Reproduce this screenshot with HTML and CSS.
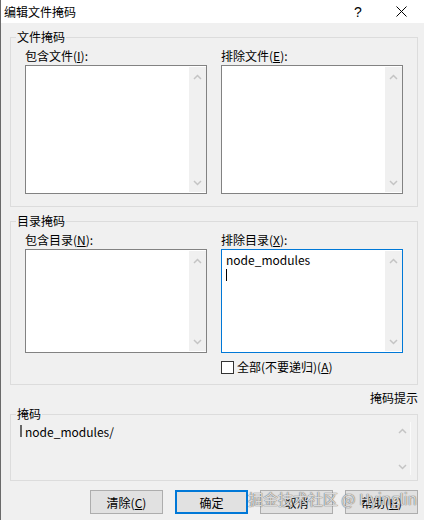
FILE: index.html
```html
<!DOCTYPE html>
<html lang="zh-CN">
<head>
    <meta charset="UTF-8">
    <title>编辑文件掩码</title>
    <link rel="stylesheet" href="styles.css">
</head>
<body>
    <div class="titlebar">
        <div class="title">编辑文件掩码</div>
        <div class="tb-help">?</div>
        <div class="tb-close">
            <svg width="11" height="11" viewBox="0 0 11 11"><path d="M0.5 0.5L10.5 10.5M10.5 0.5L0.5 10.5" stroke="#000" stroke-width="1"/></svg>
        </div>
    </div>

    <div class="content">
        <fieldset class="group">
            <legend>文件掩码</legend>
            <div class="cols">
                <div class="col">
                    <div class="label">包含文件(<u>I</u>):</div>
                    <div class="list tall">
                        <div class="list-body"></div>
                        <div class="scroll">
                            <svg class="arrow" width="9" height="6" viewBox="0 0 9 6"><path d="M1 5L4.5 1.5L8 5" fill="none" stroke="#c4c4c4" stroke-width="1.5"/></svg>
                            <svg class="arrow" width="9" height="6" viewBox="0 0 9 6"><path d="M1 1L4.5 4.5L8 1" fill="none" stroke="#c4c4c4" stroke-width="1.5"/></svg>
                        </div>
                    </div>
                </div>
                <div class="col">
                    <div class="label">排除文件(<u>E</u>):</div>
                    <div class="list tall">
                        <div class="list-body"></div>
                        <div class="scroll">
                            <svg class="arrow" width="9" height="6" viewBox="0 0 9 6"><path d="M1 5L4.5 1.5L8 5" fill="none" stroke="#c4c4c4" stroke-width="1.5"/></svg>
                            <svg class="arrow" width="9" height="6" viewBox="0 0 9 6"><path d="M1 1L4.5 4.5L8 1" fill="none" stroke="#c4c4c4" stroke-width="1.5"/></svg>
                        </div>
                    </div>
                </div>
            </div>
        </fieldset>

        <fieldset class="group dirs">
            <legend>目录掩码</legend>
            <div class="cols">
                <div class="col">
                    <div class="label">包含目录(<u>N</u>):</div>
                    <div class="list short">
                        <div class="list-body"></div>
                        <div class="scroll">
                            <svg class="arrow" width="9" height="6" viewBox="0 0 9 6"><path d="M1 5L4.5 1.5L8 5" fill="none" stroke="#c4c4c4" stroke-width="1.5"/></svg>
                            <svg class="arrow" width="9" height="6" viewBox="0 0 9 6"><path d="M1 1L4.5 4.5L8 1" fill="none" stroke="#c4c4c4" stroke-width="1.5"/></svg>
                        </div>
                    </div>
                </div>
                <div class="col">
                    <div class="label">排除目录(<u>X</u>):</div>
                    <div class="list short focused">
                        <div class="list-body">
                            <div class="entry">node_modules</div>
                            <div class="caret"></div>
                        </div>
                        <div class="scroll">
                            <svg class="arrow" width="9" height="6" viewBox="0 0 9 6"><path d="M1 5L4.5 1.5L8 5" fill="none" stroke="#c4c4c4" stroke-width="1.5"/></svg>
                            <svg class="arrow" width="9" height="6" viewBox="0 0 9 6"><path d="M1 1L4.5 4.5L8 1" fill="none" stroke="#c4c4c4" stroke-width="1.5"/></svg>
                        </div>
                    </div>
                    <label class="check">
                        <span class="box"></span>
                        全部(不要递归)(<u>A</u>)
                    </label>
                </div>
            </div>
        </fieldset>

        <div class="hint">掩码提示</div>

        <fieldset class="group mask">
            <legend>掩码</legend>
            <div class="mask-row">
                <div class="mask-text"><span class="bar"></span>node_modules/</div>
                <div class="scroll mask-scroll">
                    <svg class="arrow" width="9" height="6" viewBox="0 0 9 6"><path d="M1 5L4.5 1.5L8 5" fill="none" stroke="#c4c4c4" stroke-width="1.5"/></svg>
                    <svg class="arrow" width="9" height="6" viewBox="0 0 9 6"><path d="M1 1L4.5 4.5L8 1" fill="none" stroke="#c4c4c4" stroke-width="1.5"/></svg>
                </div>
            </div>
        </fieldset>

        <div class="buttons">
            <button class="btn">清除(<u>C</u>)</button>
            <button class="btn default">确定</button>
            <button class="btn">取消</button>
            <button class="btn">帮助(<u>H</u>)</button>
        </div>
    </div>

    <div class="watermark">掘金技术社区 @ Hyinglin</div>
</body>
</html>
```

FILE: styles.css
```css
html {
    background: #f0f0f0;
}

body {
    margin: 0;
    width: 424px;
    height: 520px;
    box-sizing: border-box;
    border-left: 1px solid #6a6a6a;
    background: #f0f0f0;
    font-family: "Noto Sans CJK SC", "Noto Sans", sans-serif;
    font-size: 12px;
    color: #000;
    position: relative;
    overflow: hidden;
}

u {
    text-decoration: underline;
}

.titlebar {
    height: 23px;
    background: #fff;
    display: flex;
    align-items: center;
    padding-left: 3px;
}

.title {
    flex: 1;
    font-size: 12px;
}

.tb-help {
    width: 40px;
    text-align: center;
    font-size: 14px;
    font-family: "Liberation Sans", sans-serif;
}

.tb-close {
    width: 46px;
    display: flex;
    justify-content: center;
    align-items: center;
}

.content {
    padding: 6px 6px 0 9px;
}

.group {
    margin: 0;
    border: 1px solid #dcdcdc;
    padding: 3px 14px 12px 14px;
    min-width: 0;
}

.group legend {
    padding: 0 1px;
    margin-left: -9px;
    line-height: 16px;
    font-size: 12px;
}

.cols {
    display: grid;
    grid-template-columns: 182px 182px;
    column-gap: 14px;
}

.label {
    line-height: 16px;
    margin-bottom: 1px;
}

.list {
    border: 1px solid #828282;
    background: #fff;
    display: flex;
    box-sizing: border-box;
}

.list.tall {
    height: 129px;
}

.list.short {
    height: 104px;
}

.list.focused {
    border-color: #0078d7;
}

.list-body {
    flex: 1;
    padding: 3px 4px;
}

.entry {
    line-height: 14px;
}

.caret {
    width: 1px;
    height: 12px;
    background: #000;
    margin-top: 2px;
}

.scroll {
    width: 17px;
    margin: 1px 0;
    background: #f0f0f0;
    display: flex;
    flex-direction: column;
    justify-content: space-between;
    align-items: center;
    padding: 7px 0 6px;
    box-sizing: border-box;
}

.dirs {
    margin-top: 6px;
    padding-bottom: 10px;
}

.check {
    display: flex;
    align-items: center;
    margin-top: 7px;
    line-height: 14px;
}

.box {
    width: 11px;
    height: 11px;
    border: 1px solid #333;
    background: #fff;
    margin-right: 3px;
}

.hint {
    text-align: right;
    line-height: 16px;
    margin-top: 5px;
}

.mask {
    padding: 0 6px 5px 9px;
}

.mask legend {
    margin-left: -4px;
}

.mask-row {
    display: flex;
}

.mask-text {
    flex: 1;
    display: flex;
    align-items: center;
    height: 16px;
    margin-top: 1px;
}

.bar {
    width: 2px;
    height: 12px;
    background: #666;
    margin-right: 3px;
}

.mask-scroll {
    height: 53px;
    margin: 0;
    border-right: 1px solid #fafafa;
    padding: 6px 0 5px;
}

.buttons {
    display: flex;
    justify-content: flex-end;
    gap: 12px;
    margin-top: 9px;
}

.btn {
    width: 73px;
    height: 24px;
    background: #e1e1e1;
    border: 1px solid #adadad;
    font-family: inherit;
    font-size: 12px;
    color: #000;
    padding: 0;
}

.btn.default {
    border: 2px solid #0078d7;
}

.watermark {
    position: absolute;
    left: 247px;
    top: 488px;
    font-size: 15px;
    color: rgba(255, 255, 255, 0.75);
    text-shadow: 0 0 1px #666, 0 0 1px #666;
    white-space: nowrap;
}
```
